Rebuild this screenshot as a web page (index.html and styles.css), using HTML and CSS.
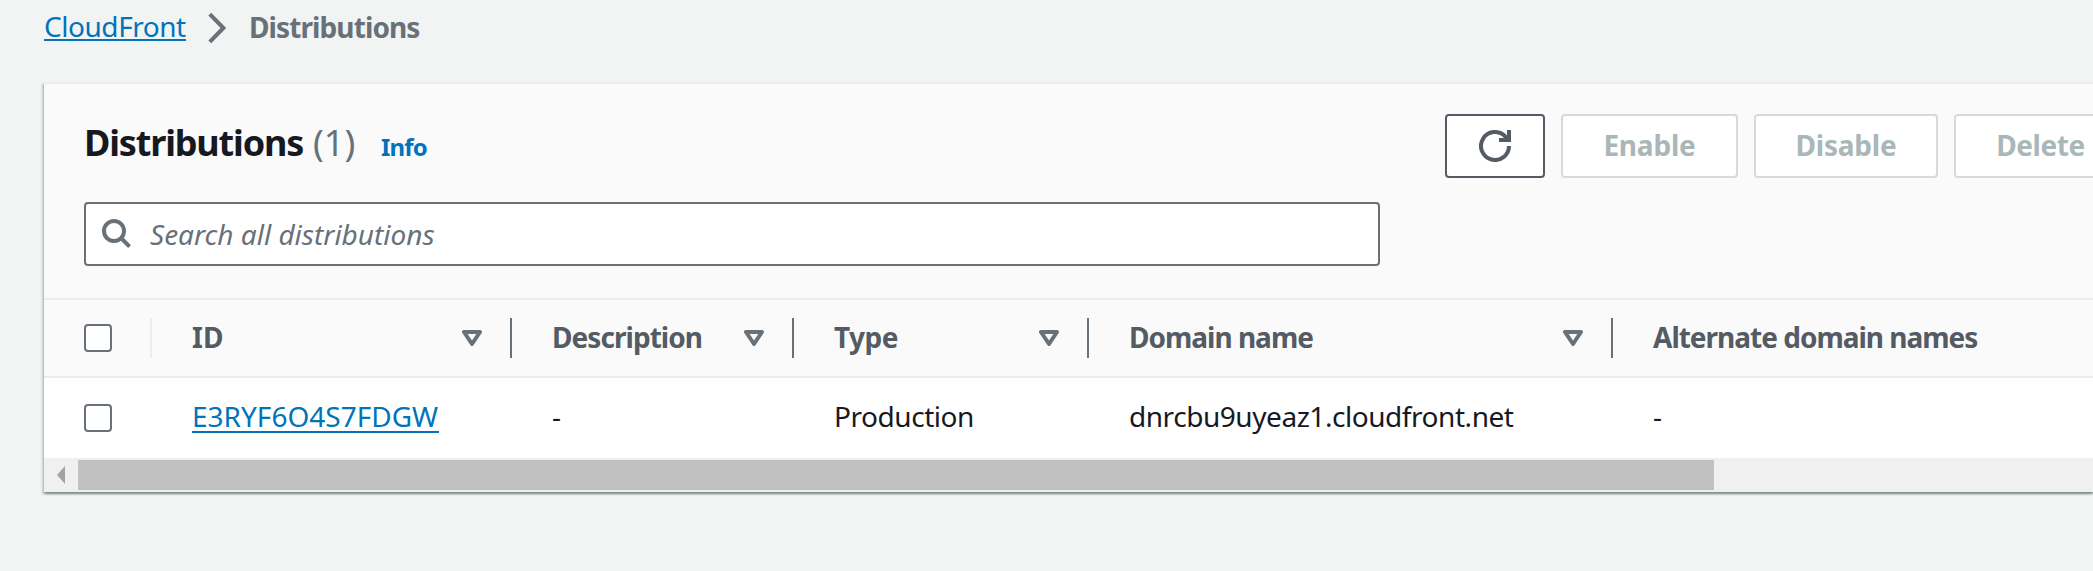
FILE: index.html
```
<!DOCTYPE html>
<html lang="en">
<head>
<meta charset="utf-8">
<title>CloudFront Distributions</title>
<link rel="stylesheet" href="styles.css">
</head>
<body>
<nav class="breadcrumb">
  <a class="link crumb-link" href="#">CloudFront</a>
  <svg class="chevron" width="20" height="32" viewBox="0 0 20 32"><path d="M1.8 2.200 15.400 16 1.800 29.800" fill="none" stroke="#687078" stroke-width="4"/></svg>
  <span class="current">Distributions</span>
</nav>
<main class="card">
  <header class="card-header">
    <div class="title-row">
      <div class="heading">
        <h1 class="title">Distributions</h1>
        <span class="count">(1)</span>
        <a class="info" href="#">Info</a>
      </div>
      <div class="actions">
        <button class="btn refresh" aria-label="Refresh"><svg width="32" height="32" viewBox="0 0 32 32"><path d="M30 16A14 14 0 1 1 26 6.200L29 10" fill="none" stroke="#545b64" stroke-width="4"/><path d="M30 0V10H20" fill="none" stroke="#545b64" stroke-width="4"/></svg></button>
        <button class="btn enable" disabled>Enable</button>
        <button class="btn disable" disabled>Disable</button>
        <button class="btn delete" disabled>Delete</button>
      </div>
    </div>
    <div class="search">
      <svg width="30" height="30" viewBox="0 0 30 30"><circle cx="12" cy="12" r="10" fill="none" stroke="#687078" stroke-width="4"/><path d="M19 19 27.600 27.600" stroke="#687078" stroke-width="4"/></svg>
      <span class="placeholder">Search all distributions</span>
    </div>
  </header>
  <div class="table">
    <div class="row head">
      <div class="cell pick"><span class="checkbox"></span></div>
      <div class="cell"><span class="h-id">ID</span><svg class="sort" width="20" height="16" viewBox="0 0 20 16"><path d="M2 2H18L10 14Z"/></svg></div>
      <div class="cell"><span class="h-desc">Description</span><svg class="sort" width="20" height="16" viewBox="0 0 20 16"><path d="M2 2H18L10 14Z"/></svg></div>
      <div class="cell"><span class="h-type">Type</span><svg class="sort" width="20" height="16" viewBox="0 0 20 16"><path d="M2 2H18L10 14Z"/></svg></div>
      <div class="cell"><span class="h-domain">Domain name</span><svg class="sort" width="20" height="16" viewBox="0 0 20 16"><path d="M2 2H18L10 14Z"/></svg></div>
      <div class="cell last"><span class="h-alt">Alternate domain names</span></div>
    </div>
    <div class="row body">
      <div class="cell pick"><span class="checkbox"></span></div>
      <div class="cell"><a class="link id-link" href="#">E3RYF6O4S7FDGW</a></div>
      <div class="cell"><span>-</span></div>
      <div class="cell"><span class="tight">Production</span></div>
      <div class="cell"><span class="tight">dnrcbu9uyeaz1.cloudfront.net</span></div>
      <div class="cell last"><span>-</span></div>
    </div>
  </div>
  <div class="scrollbar">
    <svg width="8" height="18" viewBox="0 0 8 18"><path d="M8 0V18L0 9Z" fill="#a3a3a3"/></svg>
    <div class="thumb"></div>
  </div>
</main>
</body>
</html>
```
FILE: styles.css
```
* { box-sizing: border-box; }
body {
  margin: 0;
  height: 571px;
  overflow: hidden;
  background: #f2f3f3;
  color: #16191f;
  font-family: "Noto Sans", sans-serif;
  font-size: 28px;
  line-height: 40px;
}
svg { display: block; flex: none; }
.link {
  color: #0073bb;
  text-decoration: none;
  background: linear-gradient(#0073bb, #0073bb) 0 100% / 100% 2px no-repeat;
}
.breadcrumb {
  display: flex;
  height: 82px;
  padding: 6px 0 0 44px;
}
.crumb-link { width: 142px; height: 35px; letter-spacing: -0.45px; }
.chevron { margin: 6px 0 0 22px; }
.current { margin: 1px 0 0 21px; color: #687078; font-weight: 700; letter-spacing: -0.9px; }

.card {
  margin-left: 44px;
  height: 410px;
  border-top: 2px solid #eaeded;
  background: #fff;
  box-shadow: 0 2px 2px 0 rgba(0, 28, 36, 0.3), 2px 2px 2px 0 rgba(0, 28, 36, 0.15), -2px 2px 2px 0 rgba(0, 28, 36, 0.15);
}
.card-header {
  height: 216px;
  padding: 30px 0 0 40px;
  background: #fafafa;
  border-bottom: 2px solid #eaeded;
}
.title-row { display: flex; justify-content: space-between; height: 88px; }
.heading { display: flex; align-items: baseline; height: 64px; white-space: nowrap; padding-top: 2px; }
.title { margin: 0; width: 229px; font-size: 36px; line-height: 54px; letter-spacing: -1.15px; }
.count { width: 68px; font-size: 36px; color: #687078; }
.info { font-size: 24px; font-weight: 700; letter-spacing: -0.8px; color: #0073bb; text-decoration: none; }
.actions { display: flex; gap: 16px; width: 648px; overflow: hidden; }
.btn {
  flex: none;
  display: flex;
  align-items: center;
  justify-content: center;
  height: 64px;
  padding: 0 0 3px;
  border: 2px solid #d5dbdb;
  border-radius: 4px;
  background: #fff;
  color: #aab7b8;
  font: 700 28px/40px "Noto Sans", sans-serif;
}
.refresh { width: 100px; padding: 0; border-color: #545b64; }
.enable { width: 177px; letter-spacing: -0.2px; }
.disable { width: 184px; letter-spacing: -0.2px; }
.delete { width: 173px; letter-spacing: -0.4px; }
.search {
  display: flex;
  align-items: center;
  width: 1296px;
  height: 64px;
  padding-left: 16px;
  border: 2px solid #687078;
  border-radius: 4px;
  background: #fff;
}
.placeholder { margin: 0 0 1px 18px; font-style: italic; color: #687078; }

.row { display: grid; grid-template-columns: 108px 360px 282px 295px 524px 480px; }
.head {
  height: 78px;
  background: #fafafa;
  border-bottom: 2px solid #eaeded;
  color: #545b64;
  font-weight: 700;
}
.body { height: 80px; }
.cell { display: flex; align-items: center; padding: 0 28px 0 40px; white-space: nowrap; }
.cell > span, .cell > a { margin-bottom: 4px; }
.head .cell > span { margin-bottom: 2px; }
.head .cell { align-self: center; justify-content: space-between; height: 40px; border-right: 2px solid #687078; }
.head .pick { border-color: #eaeded; }
.head .last { border: 0; }
.cell .checkbox, .head .cell > .checkbox {
  width: 28px;
  height: 28px;
  margin: 0;
  border: 2px solid #687078;
  border-radius: 4px;
  background: #fff;
}
.cell.pick { padding: 0 0 0 40px; }
.sort path { fill: none; stroke: #687078; stroke-width: 4; stroke-linejoin: round; }
.id-link { width: 247px; height: 34px; line-height: 34px; }
.h-desc { letter-spacing: -0.95px; }
.h-type { letter-spacing: -0.5px; }
.h-domain { letter-spacing: -1px; }
.h-alt { letter-spacing: -1px; }
.tight { letter-spacing: -0.45px; }

.scrollbar {
  display: flex;
  align-items: center;
  height: 34px;
  padding-left: 13px;
  background: #f0f0f0;
}
.thumb { width: 1636px; height: 30px; margin-left: 13px; background: #c1c1c1; }
```
